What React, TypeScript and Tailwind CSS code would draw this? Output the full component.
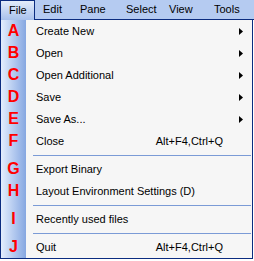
import { ReactNode } from 'react';

type Row =
  | { kind: 'item'; letter: string; label: string; shortcut?: string; sub?: boolean }
  | { kind: 'sep' };

const rows: Row[] = [
  { kind: 'item', letter: 'A', label: 'Create New', sub: true },
  { kind: 'item', letter: 'B', label: 'Open', sub: true },
  { kind: 'item', letter: 'C', label: 'Open Additional', sub: true },
  { kind: 'item', letter: 'D', label: 'Save', sub: true },
  { kind: 'item', letter: 'E', label: 'Save As...', sub: true },
  { kind: 'item', letter: 'F', label: 'Close', shortcut: 'Alt+F4,Ctrl+Q' },
  { kind: 'sep' },
  { kind: 'item', letter: 'G', label: 'Export Binary' },
  { kind: 'item', letter: 'H', label: 'Layout Environment Settings (D)' },
  { kind: 'sep' },
  { kind: 'item', letter: 'I', label: 'Recently used files' },
  { kind: 'sep' },
  { kind: 'item', letter: 'J', label: 'Quit', shortcut: 'Alt+F4,Ctrl+Q' },
];

const menus = [
  { label: 'Edit', w: 'w-[37px]' },
  { label: 'Pane', w: 'w-[46px]' },
  { label: 'Select', w: 'w-[43px]' },
  { label: 'View', w: 'w-[45px]' },
  { label: 'Tools', w: 'flex-1' },
];

function Strip({ children }: { children?: ReactNode }) {
  return (
    <div className="w-[25px] h-full shrink-0 flex items-center justify-center bg-gradient-to-r from-[#e4eefd] to-[#86a7e1]">
      {children}
    </div>
  );
}

function Arrow() {
  return (
    <svg width="4" height="7" viewBox="0 0 4 7" className="block">
      <path d="M0 0 L4 3.5 L0 7 Z" fill="#000" />
    </svg>
  );
}

export default function App() {
  return (
    <div className="w-[254px] h-[261px] bg-white text-[11px] text-black font-['Liberation_Sans',Arial,sans-serif] leading-none">
      <div className="flex h-[20px] bg-[#b5cbf1]">
        <div className="w-[35px] h-[20px] border-l border-t border-r border-[#0b2c80] pl-[8px] flex items-center bg-gradient-to-b from-[#e3ecfa] to-[#a8c1ec]">
          File
        </div>
        {menus.map((m) => (
          <div
            key={m.label}
            className={`${m.w} h-[20px] border-b border-[#0b2c80] pl-[8px] flex items-center`}
          >
            {m.label}
          </div>
        ))}
      </div>
      <div className="w-[253px] bg-[#f6f6f6] border-l border-r border-b border-[#0b2c80]">
        {rows.map((r, i) =>
          r.kind === 'sep' ? (
            <div key={i} className="flex h-[6px] items-center">
              <Strip />
              <div className="ml-[7px] mr-px flex-1 h-px bg-[#7b9bd6]" />
            </div>
          ) : (
            <div key={i} className="flex h-[22px] items-center">
              <Strip>
                <span className="text-[#ff0000] font-bold text-[16px]">{r.letter}</span>
              </Strip>
              <span className="pl-[10px] flex-1">{r.label}</span>
              {r.shortcut && <span className="mr-[29px]">{r.shortcut}</span>}
              {r.sub && (
                <span className="mr-[9px]">
                  <Arrow />
                </span>
              )}
            </div>
          )
        )}
      </div>
    </div>
  );
}
